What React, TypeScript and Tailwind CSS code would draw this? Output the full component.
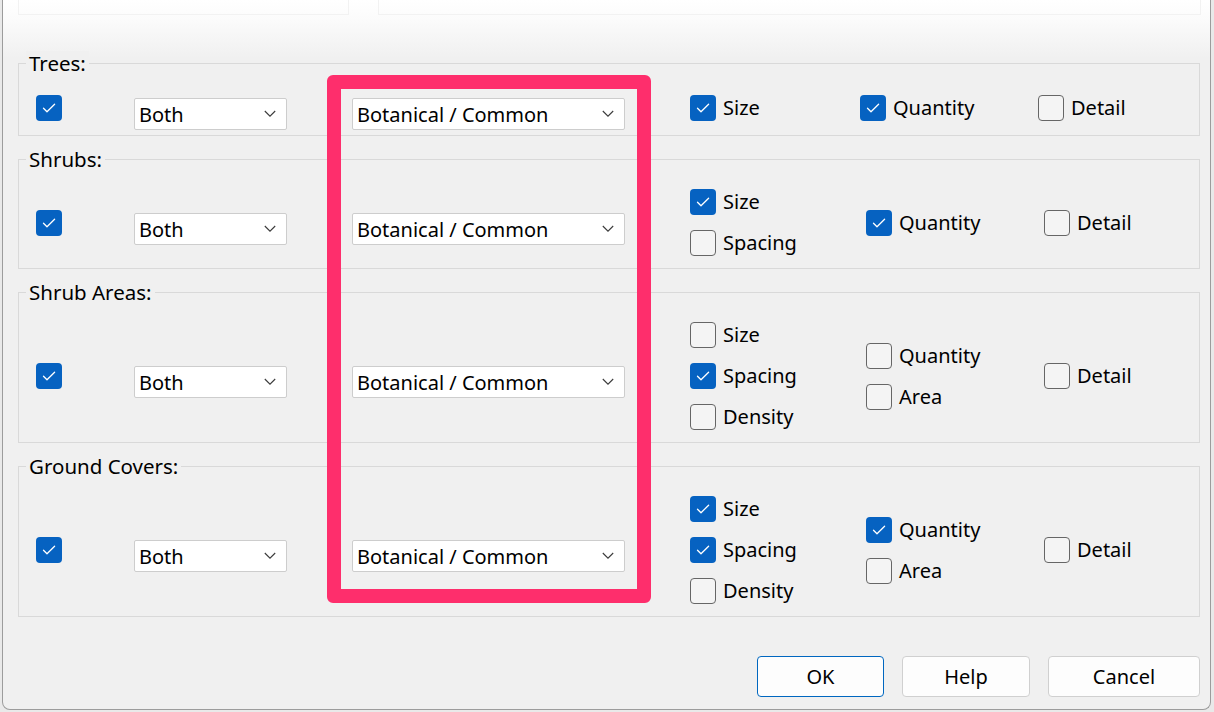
import React from "react";

const FONT = { fontFamily: '"Noto Sans", "Open Sans", Arial, sans-serif' };

function Check({ on }: { on: boolean }) {
  if (on)
    return (
      <div className="w-[26px] h-[26px] rounded-[4px] bg-[#0662c1] flex items-center justify-center shrink-0">
        <svg width="26" height="26" viewBox="0 0 26 26">
          <path d="M7.5 13.2 L11 16.8 L18.6 9.2" fill="none" stroke="#ffffff" strokeWidth="1.3" strokeLinecap="round" strokeLinejoin="round" />
        </svg>
      </div>
    );
  return <div className="w-[26px] h-[26px] rounded-[4px] border border-[#666666] bg-[#f4f4f4] shrink-0" />;
}

function Item({ on, label }: { on: boolean; label: string }) {
  return (
    <div className="flex items-center gap-[7px] h-[26px]">
      <Check on={on} />
      <span className="text-[20px] text-black leading-none">{label}</span>
    </div>
  );
}

function Select({ value, w }: { value: string; w: string }) {
  return (
    <div className={`${w} h-[32px] mt-[12px] bg-white border border-[#cdcdcd] rounded-[2px] flex items-center pl-[4px] pr-[10px] shrink-0`}>
      <span className="flex-1 text-[20px] text-black leading-none pt-[2px]">{value}</span>
      <svg width="12" height="8" viewBox="0 0 12 8">
        <path d="M0.8 1 L6 6.2 L11.2 1" fill="none" stroke="#3a3a3a" strokeWidth="1.1" />
      </svg>
    </div>
  );
}

type Opt = { label: string; on: boolean };

function Group({
  title,
  h,
  col1,
  col2,
  detail,
  c1w,
  c2w,
}: {
  title: string;
  h: string;
  col1: Opt[];
  col2: Opt[];
  detail: boolean;
  c1w: string;
  c2w: string;
}) {
  return (
    <div className={`relative ${h} border border-[#d9d9d9] pt-[17px] flex items-center pl-[17px]`}>
      <div className="absolute left-[7px] top-[-13px] px-[3px] bg-[#f0f0f0] text-[20.5px] leading-[24px] text-black">{title}</div>
      <Check on={true} />
      <div className="ml-[72px]">
        <Select value="Both" w="w-[153px]" />
      </div>
      <div className="ml-[65px]">
        <Select value="Botanical / Common" w="w-[273px]" />
      </div>
      <div className={`ml-[65px] ${c1w} flex flex-col gap-[15px]`}>
        {col1.map((o) => (
          <Item key={o.label} on={o.on} label={o.label} />
        ))}
      </div>
      <div className={`${c2w} flex flex-col gap-[15px]`}>
        {col2.map((o) => (
          <Item key={o.label} on={o.on} label={o.label} />
        ))}
      </div>
      <div>
        <Item on={detail} label="Detail" />
      </div>
    </div>
  );
}

function Btn({ label, w, primary }: { label: string; w: string; primary?: boolean }) {
  return (
    <div
      className={`${w} h-[41px] rounded-[4px] bg-[#fdfdfd] border ${
        primary ? "border-[#0067c0]" : "border-[#d0d0d0]"
      } flex items-center justify-center text-[20px] text-black`}
    >
      {label}
    </div>
  );
}

export default function App() {
  return (
    <div className="relative w-[1214px] h-[712px] overflow-hidden bg-[#e9e9e9]" style={FONT}>
      <div className="ml-[2px] w-[1209px] h-[710px] border-l border-r border-b border-[#9c9c9c] rounded-bl-[8px] rounded-br-[8px] bg-[linear-gradient(to_bottom,#ffffff_0px,#fbfbfb_20px,#f0f0f0_58px)] flex flex-col">
        <div className="flex h-[15px] pl-[15px]">
          <div className="w-[331px] border-l border-r border-b border-[#f2f2f2]" />
          <div className="ml-[29px] w-[823px] border-l border-r border-b border-[#f2f2f2]" />
        </div>
        <div className="pl-[15px] pt-[48px] flex flex-col gap-[23px] w-[1197px]">
          <Group
            title="Trees:"
            h="h-[73px]"
            c1w="w-[170px]"
            c2w="w-[178px]"
            col1={[{ label: "Size", on: true }]}
            col2={[{ label: "Quantity", on: true }]}
            detail={false}
          />
          <Group
            title="Shrubs:"
            h="h-[110px]"
            c1w="w-[176px]"
            c2w="w-[178px]"
            col1={[
              { label: "Size", on: true },
              { label: "Spacing", on: false },
            ]}
            col2={[{ label: "Quantity", on: true }]}
            detail={false}
          />
          <Group
            title="Shrub Areas:"
            h="h-[151px]"
            c1w="w-[176px]"
            c2w="w-[178px]"
            col1={[
              { label: "Size", on: false },
              { label: "Spacing", on: true },
              { label: "Density", on: false },
            ]}
            col2={[
              { label: "Quantity", on: false },
              { label: "Area", on: false },
            ]}
            detail={false}
          />
          <Group
            title="Ground Covers:"
            h="h-[151px]"
            c1w="w-[176px]"
            c2w="w-[178px]"
            col1={[
              { label: "Size", on: true },
              { label: "Spacing", on: true },
              { label: "Density", on: false },
            ]}
            col2={[
              { label: "Quantity", on: true },
              { label: "Area", on: false },
            ]}
            detail={false}
          />
        </div>
        <div className="mt-[39px] pl-[754px] flex gap-[18px]">
          <Btn label="OK" w="w-[127px]" primary />
          <Btn label="Help" w="w-[128px]" />
          <Btn label="Cancel" w="w-[152px]" />
        </div>
      </div>
      <div className="absolute left-[327px] top-[75px] w-[324px] h-[528px] border-[14px] border-[#fe2e6c] rounded-[6px]" />
    </div>
  );
}
